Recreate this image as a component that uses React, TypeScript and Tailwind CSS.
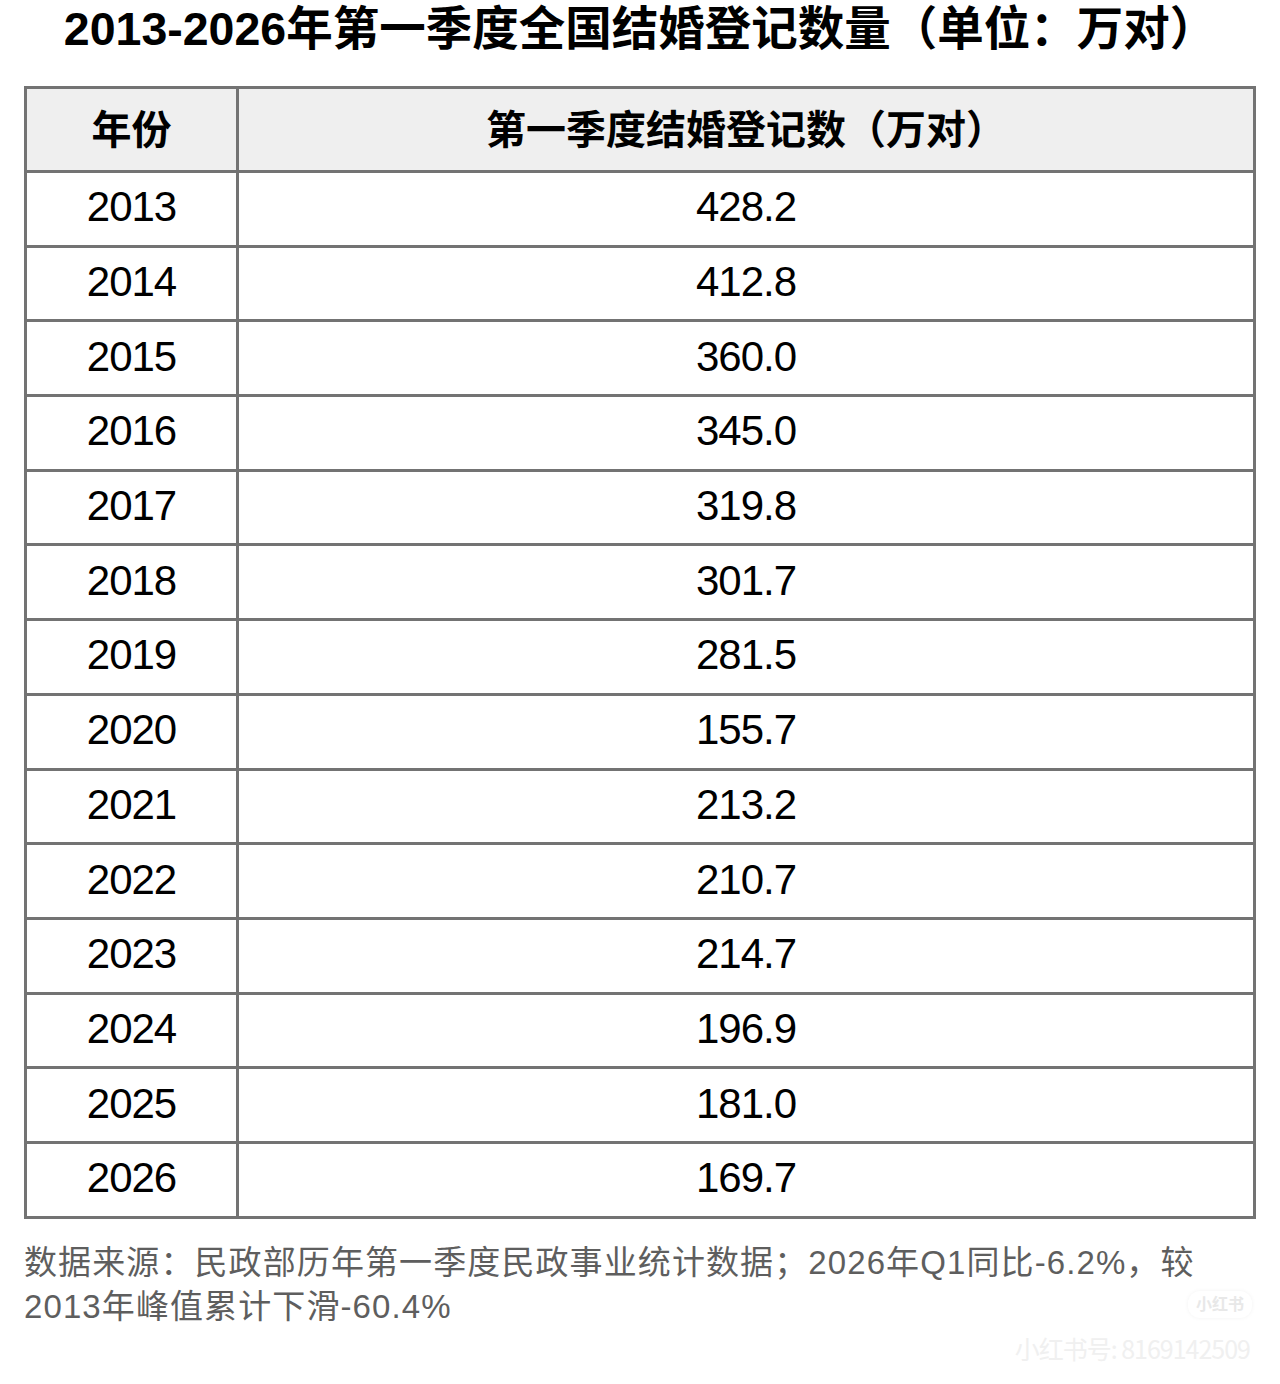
import React from "react";

const rows: [string, string][] = [
  ["2013", "428.2"],
  ["2014", "412.8"],
  ["2015", "360.0"],
  ["2016", "345.0"],
  ["2017", "319.8"],
  ["2018", "301.7"],
  ["2019", "281.5"],
  ["2020", "155.7"],
  ["2021", "213.2"],
  ["2022", "210.7"],
  ["2023", "214.7"],
  ["2024", "196.9"],
  ["2025", "181.0"],
  ["2026", "169.7"],
];

export default function App() {
  return (
    <div className="relative w-[1280px] h-[1384px] bg-white font-['Liberation_Sans','Noto_Sans_CJK_SC',sans-serif] text-black">
      <h1 className="h-[58px] text-center text-[46.5px] leading-[58px] font-bold">
        2013-2026年第一季度全国结婚登记数量（单位：万对）
      </h1>

      <div className="px-6 pt-[28px]">
        <table className="w-full h-[1129px] table-fixed border-collapse">
          <thead>
            <tr className="h-[84px] bg-[#efefef]">
              <th className="w-[212px] border-[3px] border-[#737373] text-[40px] font-bold">
                年份
              </th>
              <th className="border-[3px] border-[#737373] text-[40px] font-bold">
                第一季度结婚登记数（万对）
              </th>
            </tr>
          </thead>
          <tbody>
            {rows.map(([year, value]) => (
              <tr key={year} className="h-[74.7px]">
                <td className="pb-[4px] border-[3px] border-[#737373] text-center text-[42px] tracking-[-1px]">
                  {year}
                </td>
                <td className="pb-[4px] border-[3px] border-[#737373] text-center text-[42px] tracking-[-1px]">
                  {value}
                </td>
              </tr>
            ))}
          </tbody>
        </table>

        <p className="mt-[22px] text-[33px] leading-[44px] tracking-[1.1px] text-[#5e5e5e]">
          数据来源：民政部历年第一季度民政事业统计数据；2026年Q1同比-6.2%，较
          <br />
          2013年峰值累计下滑-60.4%
        </p>
      </div>

      {/* watermark */}
      <div className="absolute left-[1188px] top-[1291px] px-2 h-[27px] flex items-center rounded-[12px] bg-white shadow-[0_0_4px_rgba(0,0,0,0.05)] text-[16px] font-bold text-[#e8e8e8]">
        小红书
      </div>
      <div className="absolute right-[30px] top-[1330px] text-[25px] text-[#f0f0f0] font-['Noto_Sans_CJK_SC',sans-serif] tracking-[-1px]">
        小红书号: 8169142509
      </div>
    </div>
  );
}
